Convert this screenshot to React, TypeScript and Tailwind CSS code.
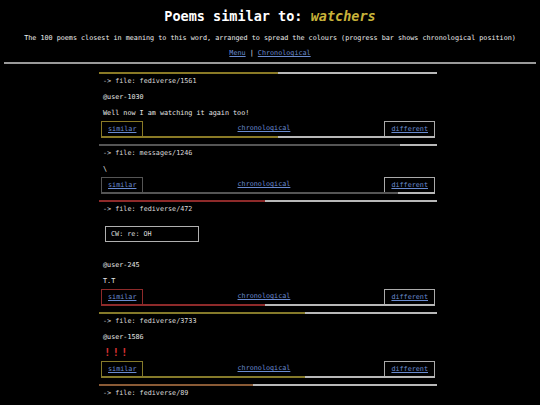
import React from "react";

type Poem = {
  file: string;
  bar: string;
  border: string;
  frac: number;
  cw?: string;
  lines: React.ReactNode[];
};

const Bang = () => (
  <span className="inline-flex">
    {[0, 1, 2].map((i) => (
      <span key={i} className="inline-block w-[8.5px] text-center text-[11px] font-bold leading-[16px] text-[#d63131]">
        !
      </span>
    ))}
  </span>
);

const poems: Poem[] = [
  {
    file: "fediverse/1561",
    bar: "bg-[#8a7a26]",
    border: "border-[#8a7a26]",
    frac: 0.53,
    lines: ["@user-1030", "Well now I am watching it again too!"],
  },
  {
    file: "messages/1246",
    bar: "bg-[#555555]",
    border: "border-[#555555]",
    frac: 0.89,
    lines: ["\\"],
  },
  {
    file: "fediverse/472",
    bar: "bg-[#8e2a2a]",
    border: "border-[#8e2a2a]",
    frac: 0.49,
    cw: "CW: re: OH",
    lines: ["@user-245", "T.T"],
  },
  {
    file: "fediverse/3733",
    bar: "bg-[#857a2a]",
    border: "border-[#857a2a]",
    frac: 0.61,
    lines: ["@user-1586", <Bang key="b" />],
  },
  {
    file: "fediverse/89",
    bar: "bg-[#8a5a35]",
    border: "border-[#8a5a35]",
    frac: 0.457,
    lines: ["@user-412", "hmm"],
  },
];

function Progress({ frac, bar }: { frac: number; bar: string }) {
  return (
    <div className="flex h-[2px] w-full">
      <div className={bar} style={{ width: `${frac * 100}%` }} />
      <div className="flex-1 bg-[#b8b8b8]" />
    </div>
  );
}

const link = "text-[#6a8bd0] underline";

function PoemBlock({ p }: { p: Poem }) {
  return (
    <div className="mb-[6px]">
      <Progress frac={p.frac} bar={p.bar} />
      <div className="h-[15px] pl-[4px] leading-[15px] text-[#dddddd]">-&gt; file: {p.file}</div>
      {p.cw && (
        <div className="mb-[15px] ml-[6px] mt-[9px] flex h-[16px] w-[94px] items-center border border-[#b0b0b0] pl-[5px] text-[#dddddd]">
          {p.cw}
        </div>
      )}
      {p.lines.map((l, i) => (
        <div key={i} className="h-[16px] pl-[4px] leading-[16px] text-[#e6e6e6]">
          {l}
        </div>
      ))}
      <div className="mx-[2px] flex flex-col">
        <div className="flex h-[15px]">
          <a className={`flex items-center border border-b-0 px-[6px] ${p.border} ${link}`}>similar</a>
          <div className="flex flex-1 items-center justify-center">
            <a className={link}>chronological</a>
          </div>
          <a className={`flex items-center border border-b-0 border-[#aaaaaa] px-[6px] ${link}`}>different</a>
        </div>
        <Progress frac={p.frac} bar={p.bar} />
      </div>
    </div>
  );
}

export default function App() {
  return (
    <div className="min-h-[405px] w-full bg-black font-['DejaVu_Sans_Mono',monospace] text-[6.75px] text-[#eeeeee]">
      <h1 className="h-[32px] text-center text-[13.5px] font-bold leading-[32px] text-white">
        Poems similar to: <em className="text-[#c8b33a]">watchers</em>
      </h1>
      <p className="h-[12px] text-center leading-[12px]">
        The 100 poems closest in meaning to this word, arranged to spread the colours (progress bar shows chronological position)
      </p>
      <p className="mt-[3px] h-[12px] text-center leading-[12px]">
        <a className={link}>Menu</a> | <a className={link}>Chronological</a>
      </p>
      <div className="mx-[4px] mt-[3px] h-[2px] bg-[#9a9a9a]" />
      <div className="ml-[99px] mt-[8px] w-[338px]">
        {poems.map((p) => (
          <PoemBlock key={p.file} p={p} />
        ))}
      </div>
    </div>
  );
}
